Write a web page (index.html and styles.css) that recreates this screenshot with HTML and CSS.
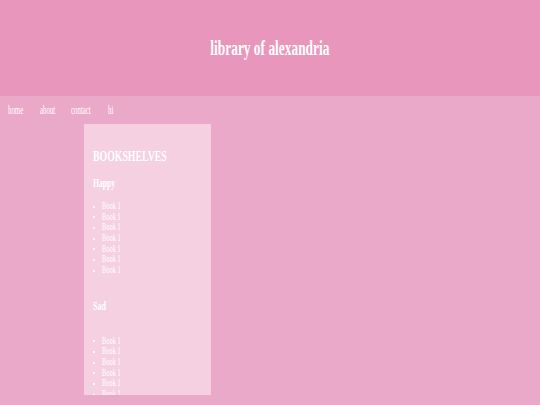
FILE: index.html
```html
<!DOCTYPE html>
<html lang="en">
<head>
<meta charset="utf-8">
<title>library of alexandria</title>
<link rel="stylesheet" href="styles.css">
</head>
<body>
<header class="site-header">
  <h1 class="site-title"><span class="squeeze title-text">library of alexandria</span></h1>
</header>
<nav class="site-nav">
  <a class="nav-link" href="#"><span class="squeeze nav-text">home</span></a>
  <a class="nav-link" href="#"><span class="squeeze nav-text">about</span></a>
  <a class="nav-link" href="#"><span class="squeeze nav-text">contact</span></a>
  <a class="nav-link" href="#"><span class="squeeze nav-text">hi</span></a>
</nav>
<main class="content">
  <aside class="shelves">
    <h2 class="shelves-title"><span class="squeeze s70">BOOKSHELVES</span></h2>
    <h3 class="shelf-name shelf-happy"><span class="squeeze s64">Happy</span></h3>
    <ul class="book-list">
      <li class="book"><span class="squeeze s61">Book 1</span></li>
      <li class="book"><span class="squeeze s61">Book 1</span></li>
      <li class="book"><span class="squeeze s61">Book 1</span></li>
      <li class="book"><span class="squeeze s61">Book 1</span></li>
      <li class="book"><span class="squeeze s61">Book 1</span></li>
      <li class="book"><span class="squeeze s61">Book 1</span></li>
      <li class="book"><span class="squeeze s61">Book 1</span></li>
    </ul>
    <h3 class="shelf-name shelf-sad"><span class="squeeze s67">Sad</span></h3>
    <ul class="book-list book-list-sad">
      <li class="book"><span class="squeeze s61">Book 1</span></li>
      <li class="book"><span class="squeeze s61">Book 1</span></li>
      <li class="book"><span class="squeeze s61">Book 1</span></li>
      <li class="book"><span class="squeeze s61">Book 1</span></li>
      <li class="book"><span class="squeeze s61">Book 1</span></li>
      <li class="book"><span class="squeeze s61">Book 1</span></li>
      <li class="book"><span class="squeeze s61">Book 1</span></li>
    </ul>
  </aside>
</main>
</body>
</html>
```

FILE: styles.css
```css
html, body {
  margin: 0;
  padding: 0;
}

body {
  background: #eba9c9;
  font-family: "Liberation Serif", "Times New Roman", serif;
  color: #ffffff;
  width: 540px;
  height: 405px;
  overflow: hidden;
}

.squeeze {
  display: inline-block;
  white-space: nowrap;
  transform-origin: left center;
}

.site-header {
  background: #e996bc;
  height: 96px;
  box-sizing: border-box;
  padding-top: 36px;
}

.site-title {
  margin: 0;
  font-size: 20px;
  line-height: 24px;
  font-weight: bold;
  text-align: center;
  color: #fff;
}

.title-text {
  transform-origin: center center;
  transform: scaleX(0.67);
}

.site-nav {
  display: grid;
  grid-template-columns: 32px 31px 37px auto;
  height: 28px;
  box-sizing: border-box;
  padding: 7px 0 7px 8px;
}

.nav-link {
  color: #fff;
  text-decoration: none;
  font-size: 12px;
  line-height: 14px;
}

.nav-text {
  transform: scaleX(0.57);
}

.content {
  display: flex;
  padding-left: 84px;
}

.shelves {
  width: 127px;
  height: 271px;
  overflow: hidden;
  box-sizing: border-box;
  background: #f5d0e1;
  padding: 25px 0 0 9px;
}

.s70 { transform: scaleX(0.70); }
.s64 { transform: scaleX(0.64); }
.s67 { transform: scaleX(0.67); }
.s61 { transform: scaleX(0.61); }

.shelves-title {
  margin: 0;
  font-size: 14px;
  line-height: 16px;
  font-weight: bold;
}

.shelf-name {
  margin: 0;
  font-size: 12px;
  line-height: 13px;
  font-weight: bold;
}

.shelf-happy {
  margin-top: 12px;
}

.shelf-sad {
  margin-top: 24px;
}

.book-list {
  list-style: none;
  margin: 11px 0 0 0;
  padding: 0;
}

.book-list-sad {
  margin-top: 23px;
}

.book {
  display: flex;
  align-items: center;
  font-size: 10.5px;
  line-height: 10.67px;
  height: 10.67px;
}

.book::before {
  content: "";
  display: block;
  width: 2px;
  height: 2px;
  border-radius: 1px;
  background: #fff;
  margin: 1px 7px 0 0;
  flex: none;
}
```
